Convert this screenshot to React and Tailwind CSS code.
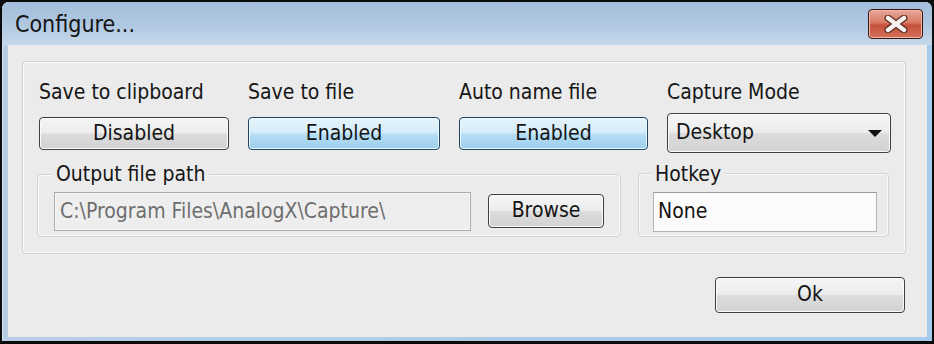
import React from 'react'

const btnGray =
  'bg-[linear-gradient(to_bottom,#f6f6f6_0%,#ececec_48%,#dcdcdc_52%,#d2d2d2_100%)] border border-[#3f3f3f] rounded-[4px] shadow-[inset_0_0_0_1px_#fbfbfb]'
const btnBlue =
  'bg-[linear-gradient(to_bottom,#e6f4fc_0%,#d4ecfa_46%,#b4dcf4_54%,#9ccfee_100%)] border border-[#1f4460] rounded-[4px] shadow-[inset_0_0_0_1px_#eef8fe]'

const Column = ({ label, width, children }) => (
  <div className="flex flex-col" style={{ width }}>
    <div className="h-[26px] leading-[26px] text-[21px] text-[#161616] whitespace-nowrap">{label}</div>
    <div className="mt-[8px] h-[40px] flex items-center">{children}</div>
  </div>
)

const CloseIcon = () => (
  <svg width="24" height="18" viewBox="0 0 24 18">
    <path d="M4 3 L20 15 M20 3 L4 15" stroke="#5a2a22" strokeWidth="7" strokeLinecap="round" />
    <path d="M4 3 L20 15 M20 3 L4 15" stroke="#f7f1ef" strokeWidth="4.5" strokeLinecap="round" />
  </svg>
)

export default function App() {
  return (
    <div className="w-[934px] h-[344px] bg-[#0b0b0b] pt-[2px] pl-[2px] pr-[2px] pb-[3px] font-['DejaVu_Sans_Condensed','DejaVu_Sans',sans-serif] overflow-hidden">
      <div className="h-full flex flex-col rounded-t-[7px] bg-[linear-gradient(to_right,#b7cde4,#a6cbec)] shadow-[inset_1px_1px_0_#d8e4ef]">
        {/* Title bar */}
        <div className="h-[43px] flex items-start justify-between pl-[13px] pr-[9px] rounded-t-[7px] bg-[linear-gradient(to_bottom,#a3bedb_0%,#b0c8e1_55%,#c7d9eb_100%)]">
          <span className="mt-[8px] text-[23px] leading-[28px] text-[#141414]">Configure...</span>
          <button className="mt-[7px] w-[55px] h-[30px] flex items-center justify-center rounded-[4px] border border-[#3b1410] bg-[linear-gradient(to_bottom,#e7a999_0%,#d97a66_45%,#c4503b_55%,#d4705a_100%)] shadow-[inset_0_0_0_1px_#efb8a8]">
            <CloseIcon />
          </button>
        </div>

        {/* Client area */}
        <div className="flex-1 ml-[6px] mr-[5px] mb-[4px] bg-[#ebebeb] flex flex-col pt-[16px] pl-[14px] pr-[21px]">
          <div className="h-[193px] border border-[#cfcfcf] rounded-[4px] shadow-[inset_0_0_0_1px_#fbfbfb] pl-[14px] pt-[17px]">
            <div className="flex gap-[19px] pl-[2px]">
              <Column label="Save to clipboard" width={190}>
                <button className={`w-full h-[33px] text-[21px] text-[#141414] ${btnGray}`}>Disabled</button>
              </Column>
              <Column label="Save to file" width={192}>
                <button className={`w-full h-[33px] text-[21px] text-[#141414] ${btnBlue}`}>Enabled</button>
              </Column>
              <Column label="Auto name file" width={189}>
                <button className={`w-full h-[33px] text-[21px] text-[#141414] ${btnBlue}`}>Enabled</button>
              </Column>
              <Column label="Capture Mode" width={224}>
                <div className={`w-full h-[40px] flex items-center justify-between pl-[8px] pr-[7px] text-[21px] text-[#141414] ${btnGray} rounded-[3px]`}>
                  <span>Desktop</span>
                  <svg width="16" height="9" viewBox="0 0 16 9">
                    <path d="M1 1 L15 1 L8 8 Z" fill="#111" />
                  </svg>
                </div>
              </Column>
            </div>

            <div className="flex mt-[21px]">
              {/* Output file path */}
              <div className="relative w-[584px] h-[63px] border border-[#d3d3d3] rounded-[4px] shadow-[inset_0_0_0_1px_#f9f9f9] flex items-start pl-[16px]">
                <span className="absolute left-[14px] -top-[14px] px-[4px] bg-[#ebebeb] text-[21px] leading-[26px] text-[#161616]">Output file path</span>
                <div className="mt-[17px] w-[417px] h-[39px] border border-[#ababab] bg-[#eeeeee] shadow-[inset_0_0_0_1px_#f6f6f6] flex items-center pl-[5px] text-[21px] text-[#6e6e6e] whitespace-nowrap">
                  C:\Program Files\AnalogX\Capture\
                </div>
                <button className={`mt-[19px] ml-[17px] w-[116px] h-[34px] text-[21px] text-[#141414] ${btnGray}`}>Browse</button>
              </div>

              {/* Hotkey */}
              <div className="relative ml-[17px] -mt-[1px] w-[251px] h-[64px] border border-[#d3d3d3] rounded-[4px] shadow-[inset_0_0_0_1px_#f9f9f9] pl-[14px]">
                <span className="absolute left-[12px] -top-[13px] px-[4px] bg-[#ebebeb] text-[21px] leading-[26px] text-[#161616]">Hotkey</span>
                <div className="mt-[18px] w-[224px] h-[40px] border border-[#b3b3b3] border-t-[#9c9c9c] bg-[#fbfbfb] flex items-center pl-[4px] text-[21px] text-[#141414]">
                  None
                </div>
              </div>
            </div>
          </div>

          <div className="flex justify-end mt-[23px] mr-[1px]">
            <button className={`w-[190px] h-[36px] text-[21px] text-[#141414] ${btnGray}`}>Ok</button>
          </div>
        </div>
      </div>
    </div>
  )
}
